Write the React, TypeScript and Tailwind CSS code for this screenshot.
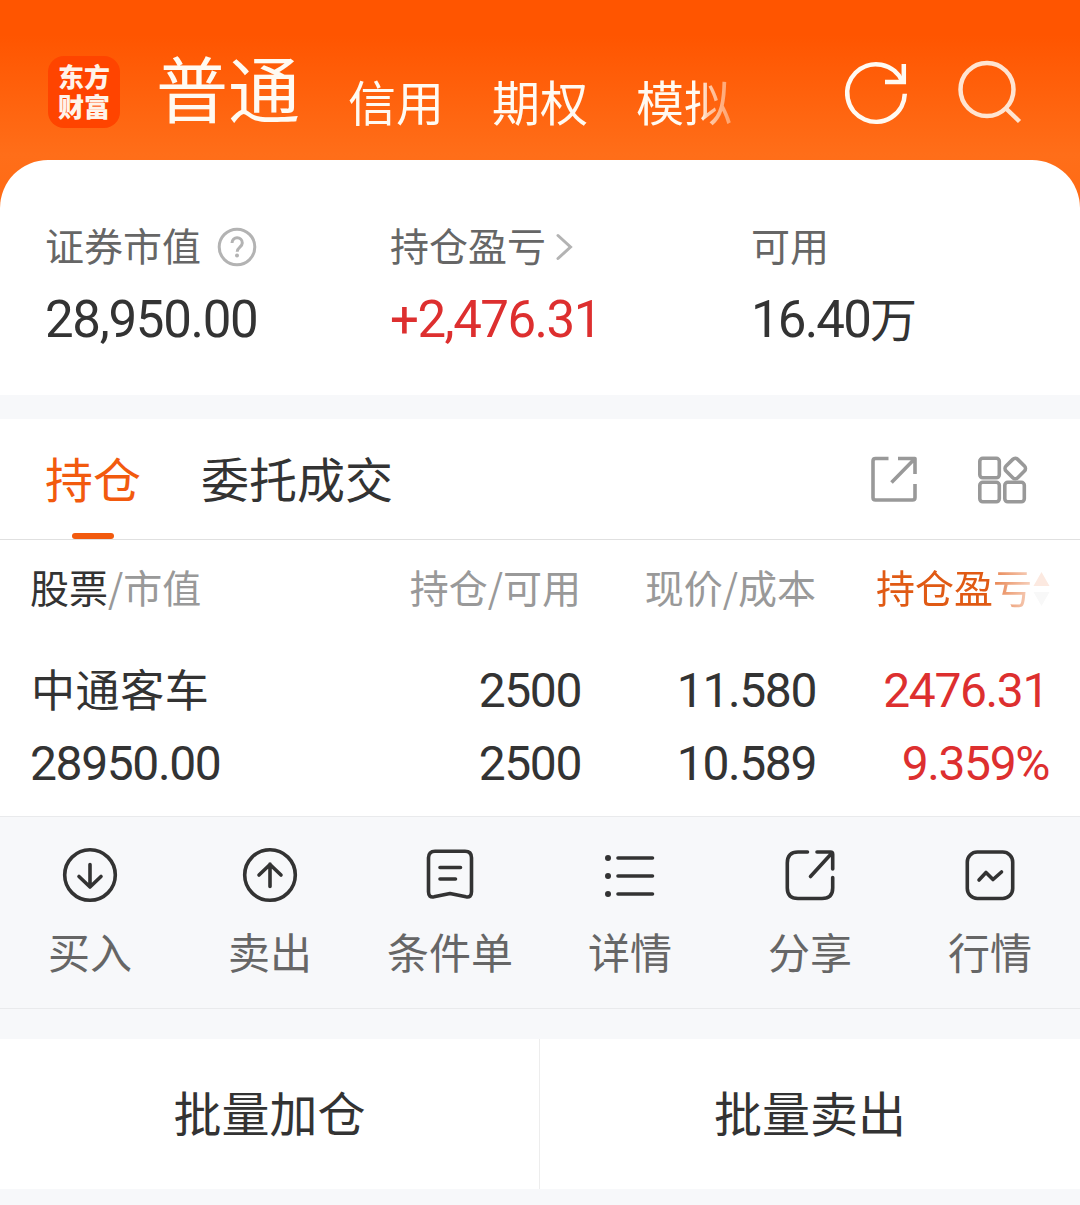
import type { ReactNode } from 'react'

interface Action {
  label: string
  icon: ReactNode
}

const ACCOUNT_TABS = ['信用', '期权', '模拟']

const ACTIONS: Action[] = [
  {
    label: '买入',
    icon: (
      <>
        <circle cx="30" cy="30" r="25.3" />
        <path d="M30 19.500v22.500M19 31.500l11 10.500 11-10.500" />
      </>
    ),
  },
  {
    label: '卖出',
    icon: (
      <>
        <circle cx="30" cy="30" r="25.3" />
        <path d="M30 41.500v-22.500M19 30l11-10.500L41 30" />
      </>
    ),
  },
  {
    label: '条件单',
    icon: (
      <>
        <path d="M15 6.300h30q6.500 0 6.500 6.500v34q0 6-5.500 5L30 48.500l-16 3.300q-5.500 1-5.500-5v-34Q8.500 6.300 15 6.300z" />
        <path d="M20 22.500h20.500M20 34h15.500" />
      </>
    ),
  },
  {
    label: '详情',
    icon: (
      <>
        <path d="M18 13h34.500M18 31h34.500M18 49h34.500" />
        <path strokeWidth="6" d="M8 13h.01M8 31h.01M8 49h.01" />
      </>
    ),
  },
  {
    label: '分享',
    icon: (
      <>
        <path d="M27.500 7H18Q7.300 7 7.300 18v25Q7.300 53.500 18 53.500h24Q52.700 53.500 52.700 43V32.500" />
        <path d="M37 7h13.500q2.200 0 2.200 2.200V24M51.500 8.500L30.500 31.500" />
      </>
    ),
  },
  {
    label: '行情',
    icon: (
      <>
        <rect x="7.300" y="7" width="45.400" height="46.500" rx="10" />
        <path d="M19 35l7-7.500 7 7 8.500-7.500" />
      </>
    ),
  },
]

function Header() {
  return (
    <header className="flex h-[160px] items-start pl-12">
      <div className="mt-14 flex size-[72px] flex-col items-center rounded-2xl bg-[#ff4400] pt-[5px] text-[26px] leading-[30px] font-black text-[#fff3ea]">
        <span>东方</span>
        <span>财富</span>
      </div>

      <nav className="ml-9 flex h-[150px] w-[600px] items-start gap-12 whitespace-nowrap text-[#fffaf2] [mask-image:linear-gradient(90deg,#000_545px,rgba(0,0,0,0.7)_551px,rgba(0,0,0,0.4)_575px,transparent_600px)]">
        <span className="mt-8 text-[72px] leading-[108px]">普通</span>
        {ACCOUNT_TABS.map((tab) => (
          <span key={tab} className="mt-[64px] text-[48px] leading-[72px]">{tab}</span>
        ))}
      </nav>

      <svg className="mt-[53px] ml-[80px] size-20" viewBox="0 0 80 80" fill="none" stroke="#fffaf2" strokeWidth="4.500">
        <path d="M68.790 40.800A28.800 28.800 0 1 1 66.400 28.500" />
        <path d="M49 29h18.800V11" />
      </svg>
      <svg className="mt-[51px] ml-[34px] size-20" viewBox="0 0 80 80" fill="none" stroke="#ffe4d1" strokeWidth="4.500">
        <circle cx="37" cy="38.500" r="26.500" />
        <path d="M56 57.500l13.500 13" />
      </svg>
    </header>
  )
}

function Summary() {
  return (
    <section className="flex h-[235px] rounded-t-[48px] bg-white pt-[58px] pl-[45px] text-[39px] leading-[52px] text-[#666]">
      <div className="w-[345px]">
        <div className="flex items-center">
          证券市值
          <svg className="mt-1.5 ml-4 size-10" viewBox="0 0 40 40" fill="none" stroke="#b3b3b3" strokeWidth="3">
            <circle cx="20" cy="20" r="17.800" />
            <path d="M15 16c0-7.200 10.300-6.700 10.300 0 0 4-5.100 4.200-5.100 8.800" />
            <circle cx="20" cy="28.500" r="1" strokeWidth="2" />
          </svg>
        </div>
        <div className="mt-[23px] font-[Roboto] text-[51px] leading-[54px] tracking-[-1.300px] text-[#333]">28,950.00</div>
      </div>
      <div className="w-[361px]">
        <div className="flex items-center">
          持仓盈亏
          <svg className="mt-1.5 ml-[7px] h-8 w-6" viewBox="0 0 24 32" fill="none" stroke="#b3b3b3" strokeWidth="3" strokeLinecap="round">
            <path d="M5 4.500L17.500 16 5 27.500" />
          </svg>
        </div>
        <div className="mt-[23px] font-[Roboto] text-[51px] leading-[54px] tracking-[-1.500px] text-[#dd2f2f]">+2,476.31</div>
      </div>
      <div>
        <div>可用</div>
        <div className="mt-[23px] font-[Roboto] text-[51px] leading-[54px] tracking-[-1.800px] text-[#333]">
          16.40<span className="font-[Noto_Sans_CJK_SC] text-[47px] leading-none">万</span>
        </div>
      </div>
    </section>
  )
}

function Tabs() {
  return (
    <section className="mt-6 flex h-[121px] border-b border-[#e0e0e0] bg-white pl-[45px] text-[48px] leading-[64px] text-[#333]">
      <div className="flex flex-col items-center text-[#f25a0e]">
        <span className="mt-[26px]">持仓</span>
        <span className="mt-6 h-1.5 w-[42px] rounded-full bg-[#f25a0e]" />
      </div>
      <span className="mt-[26px] ml-[60px]">委托成交</span>

      <svg className="mt-[30px] mr-[47px] ml-auto size-[60px]" viewBox="0 0 60 60" fill="none" stroke="#999" strokeWidth="3.600" strokeLinejoin="round">
        <path d="M25.500 9.500H12.500q-2.500 0-2.500 2.500v36.500q0 2.500 2.500 2.500h37q2.500 0 2.500-2.500V35" />
        <path d="M35 9.500h17V25M51 10.500L28.500 33.500" />
      </svg>
      <svg className="mt-[30px] mr-[50px] size-[60px]" viewBox="0 0 60 60" fill="none" stroke="#999" strokeWidth="3.600">
        <rect x="9.800" y="9.300" width="19.500" height="19.500" rx="3" />
        <rect x="9.800" y="33.300" width="19.500" height="19.500" rx="3" />
        <rect x="34.800" y="33.300" width="19.500" height="19.500" rx="3" />
        <rect x="37" y="11.300" width="16.500" height="16.500" rx="3.500" transform="rotate(45 45.250 19.550)" />
      </svg>
    </section>
  )
}

function Holdings() {
  return (
    <section className="h-[276px] bg-white pr-[30px] pl-[30px] text-[#333]">
      <div className="flex pt-5 text-[39px] leading-[52px] text-[#999]">
        <div className="w-[271px]"><span className="text-[#333]">股票</span>/市值</div>
        <div className="w-[280px] text-right">持仓/可用</div>
        <div className="w-[235px] text-right">现价/成本</div>
        <div className="ml-auto flex items-center">
          <span className="text-[#e05a14] [mask-image:linear-gradient(90deg,#000_114px,rgba(0,0,0,0.7)_120px,rgba(0,0,0,0.3)_154px)]">持仓盈亏</span>
          <svg className="mt-1.5 ml-[1px] h-9 w-[17px]" viewBox="0 0 17 36">
            <path d="M8.500 1l8 14h-16z" fill="#fce9e0" />
            <path d="M8.500 35l8-14h-16z" fill="#f8f8f8" />
          </svg>
        </div>
      </div>
      <div className="mt-[49px] flex font-[Roboto] text-[48px] leading-[60px] tracking-[-1.400px]">
        <div className="mt-[-3px] w-[271px] pl-px font-[Noto_Sans_CJK_SC] text-[44px] tracking-[0.600px]">中通客车</div>
        <div className="w-[280px] text-right">2500</div>
        <div className="w-[235px] text-right">11.580</div>
        <div className="flex-1 pr-0.5 text-right text-[#dd2f2f]">2476.31</div>
      </div>
      <div className="mt-[13px] flex font-[Roboto] text-[48px] leading-[60px] tracking-[-1.400px]">
        <div className="w-[271px]">28950.00</div>
        <div className="w-[280px] text-right">2500</div>
        <div className="w-[235px] text-right">10.589</div>
        <div className="flex-1 pr-px text-right text-[#dd2f2f]">9.359%</div>
      </div>
    </section>
  )
}

function ActionBar() {
  return (
    <section className="grid h-[193px] grid-cols-6 border-y border-[#e9eaec] bg-[#f7f8fa]">
      {ACTIONS.map(({ label, icon }) => (
        <div key={label} className="flex flex-col items-center pt-7">
          <svg className="size-[60px]" viewBox="0 0 60 60" fill="none" stroke="#333" strokeWidth="3.600" strokeLinecap="round" strokeLinejoin="round">
            {icon}
          </svg>
          <span className="mt-[18px] text-[42px] leading-[56px] text-[#666]">{label}</span>
        </div>
      ))}
    </section>
  )
}

export default function App() {
  return (
    <div className="h-[1205px] w-[1080px] overflow-hidden bg-[#f7f8fa] font-[Noto_Sans_CJK_SC,sans-serif]">
      <div className="bg-[linear-gradient(180deg,#ff5500_35px,#ff6e19_155px,#ff6a14_210px)]">
        <Header />
        <Summary />
      </div>
      <Tabs />
      <Holdings />
      <ActionBar />
      <section className="mt-[30px] grid h-[150px] grid-cols-2 bg-white text-center text-[48px] leading-[145px] text-[#333]">
        <div className="border-r border-[#ededed]">批量加仓</div>
        <div>批量卖出</div>
      </section>
    </div>
  )
}
